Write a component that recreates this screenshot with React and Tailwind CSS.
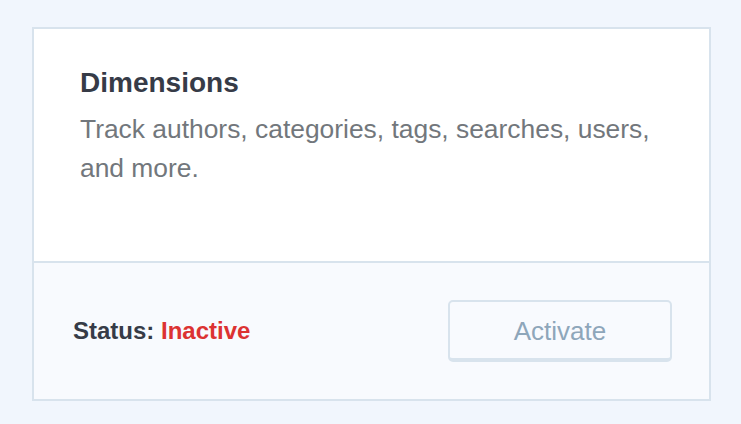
import React from 'react';

const App = () => {
  return (
    <div className="min-h-screen w-full bg-[#f1f6fd] pt-[27px] pl-[32px]" style={{ fontFamily: '"Liberation Sans", Arial, sans-serif' }}>
      <div className="w-[679px] border-2 border-[#d8e3ed] bg-white">
        <div className="h-[232px] px-[46px] pt-[38px]">
          <h3 className="text-[28px] font-bold leading-[32px] text-[#363b47]">Dimensions</h3>
          <p className="mt-[11px] text-[26.4px] leading-[38.5px] text-[#72777c]">
            Track authors, categories, tags, searches, users, and more.
          </p>
        </div>
        <div className="flex h-[138px] items-center justify-between border-t-2 border-[#d8e3ed] bg-[#f8fafe] pl-[39px] pr-[37px]">
          <p className="text-[24px] font-bold text-[#363b47]">
            Status: <span className="text-[#dc3232]">Inactive</span>
          </p>
          <button className="h-[62px] w-[224px] rounded-[5px] border-2 border-b-4 border-[#d8e3ed] bg-[#f8fafe] pt-[2px] text-[26px] text-[#8ea6ba]">
            Activate
          </button>
        </div>
      </div>
    </div>
  );
};

export default App;
